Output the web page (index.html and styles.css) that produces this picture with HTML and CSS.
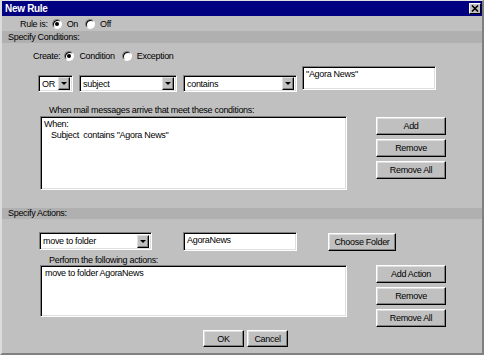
FILE: index.html
```html
<!DOCTYPE html>
<html lang="en">
<head>
  <meta charset="UTF-8" />
  <title>New Rule</title>
  <link rel="stylesheet" href="styles.css">
</head>
<body>
  <div class="window">
    <div class="titlebar">
      <span class="title">New Rule</span>
      <span class="close">
        <svg width="8" height="7" viewBox="0 0 8 7"><path d="M1 0.5 L7 6.5 M7 0.5 L1 6.5" stroke="#000" stroke-width="1.6" fill="none"/></svg>
      </span>
    </div>

    <!-- Rule state -->
    <div class="rule-row">
      <span>Rule is:</span>
      <span class="radio on"></span><span class="radio-label">On</span>
      <span class="radio"></span><span class="radio-label">Off</span>
    </div>

    <div class="section-head">Specify Conditions:</div>

    <!-- Conditions -->
    <div class="create-row">
      <span>Create:</span>
      <span class="radio on"></span><span class="radio-label">Condition</span>
      <span class="radio"></span><span class="radio-label">Exception</span>
    </div>

    <div class="criteria-row">
      <div class="select sel-op"><span class="val">OR</span><span class="arrow"><i></i></span></div>
      <div class="select sel-field"><span class="val">subject</span><span class="arrow"><i></i></span></div>
      <div class="select sel-cmp"><span class="val">contains</span><span class="arrow"><i></i></span></div>
      <div class="textbox tb-value">"Agora News"</div>
    </div>

    <div class="list-block cond-block">
      <div class="list-col">
        <div class="list-label cond-label">When mail messages arrive that meet these conditions:</div>
        <div class="listbox cond-list">
          <div>When:</div>
          <div class="indent">Subject&nbsp; contains "Agora News"</div>
        </div>
      </div>
      <div class="btn-col cond-btns">
        <button class="btn">Add</button>
        <button class="btn">Remove</button>
        <button class="btn">Remove All</button>
      </div>
    </div>

    <div class="section-head actions-head">Specify Actions:</div>

    <!-- Actions -->
    <div class="action-row">
      <div class="select sel-action"><span class="val">move to folder</span><span class="arrow"><i></i></span></div>
      <div class="textbox tb-folder">AgoraNews</div>
      <button class="btn btn-choose">Choose Folder</button>
    </div>

    <div class="list-block act-block">
      <div class="list-col">
        <div class="list-label act-label">Perform the following actions:</div>
        <div class="listbox act-list">
          <div>move to folder AgoraNews</div>
        </div>
      </div>
      <div class="btn-col act-btns">
        <button class="btn">Add Action</button>
        <button class="btn">Remove</button>
        <button class="btn">Remove All</button>
      </div>
    </div>

    <div class="footer">
      <button class="btn btn-small">OK</button>
      <button class="btn btn-small">Cancel</button>
    </div>
  </div>
</body>
</html>
```

FILE: styles.css
```css
* {
  box-sizing: border-box;
}

body {
  margin: 0;
  font-family: 'Liberation Sans', Arial, sans-serif;
  font-size: 9px;
  letter-spacing: -0.3px;
  color: #000;
  background-color: #c0c0c0;
}

.window {
  width: 484px;
  height: 355px;
  background-color: #c0c0c0;
  border-top: 1px solid #dfdfdf;
  border-left: 2px solid #dcdcdc;
  border-right: 2px solid #808080;
  border-bottom: 2px solid #808080;
  overflow: hidden;
}

/* Title bar */
.titlebar {
  height: 15px;
  background-color: #000080;
  color: #fff;
  display: flex;
  align-items: center;
  justify-content: space-between;
  padding: 0 1px 0 3px;
}

.title {
  font-size: 10px;
  font-weight: bold;
}

.close {
  width: 12px;
  height: 11px;
  background-color: #c0c0c0;
  border: 1px solid;
  border-color: #fff #000 #000 #fff;
  display: flex;
  align-items: center;
  justify-content: center;
}

/* Radio rows */
.rule-row,
.create-row {
  display: flex;
  align-items: center;
}

.rule-row {
  height: 15px;
  padding-left: 18px;
}

.create-row {
  height: 12px;
  margin-top: 7px;
  padding-left: 31px;
}

.radio {
  width: 10px;
  height: 10px;
  border-radius: 50%;
  background-color: #fff;
  border: 1px solid;
  border-color: #808080 #fff #fff #808080;
  box-shadow: inset 1px 1px #000;
  margin: 0 5px 0 4px;
  position: relative;
}

.radio.on::after {
  content: '';
  position: absolute;
  left: 2px;
  top: 2px;
  width: 4px;
  height: 4px;
  border-radius: 50%;
  background-color: #000;
}

.radio-label {
  margin-right: 3px;
}

/* Section headers */
.section-head {
  height: 12px;
  line-height: 12px;
  background-color: #b0b0b0;
  padding-left: 6px;
}

.actions-head {
  height: 11px;
  line-height: 11px;
  margin-top: 18px;
}

/* Sunken fields */
.select,
.textbox,
.listbox {
  background-color: #fff;
  border: 1px solid;
  border-color: #808080 #fff #fff #808080;
  box-shadow: inset 1px 1px #000, inset -1px -1px #dfdfdf;
}

.select {
  height: 17px;
  display: flex;
  align-items: center;
  padding: 2px 2px 2px 3px;
}

.select .val {
  flex: 1;
}

.select .arrow {
  width: 12px;
  height: 13px;
  background-color: #c0c0c0;
  border: 1px solid;
  border-color: #dfdfdf #000 #000 #dfdfdf;
  box-shadow: inset -1px -1px #808080;
  display: flex;
  align-items: center;
  justify-content: center;
}

.select .arrow i {
  border-left: 3px solid transparent;
  border-right: 3px solid transparent;
  border-top: 3px solid #000;
}

.textbox {
  padding: 2px 3px;
}

/* Criteria */
.criteria-row {
  display: flex;
  align-items: flex-start;
  margin-top: 4px;
  padding-left: 36px;
  height: 26px;
}

.criteria-row .select {
  margin-top: 9px;
}

.sel-op {
  width: 35px;
}

.sel-field {
  width: 98px;
  margin-left: 6px;
}

.sel-cmp {
  width: 114px;
  margin-left: 6px;
}

.tb-value {
  width: 134px;
  height: 24px;
  margin-left: 5px;
}

/* List blocks */
.list-block {
  display: flex;
  align-items: flex-start;
  padding-left: 38px;
}

.cond-block {
  margin-top: 12px;
}

.act-block {
  margin-top: 4px;
}

.list-col {
  width: 307px;
}

.list-label {
  padding-left: 9px;
}

.cond-label {
  height: 12px;
  line-height: 12px;
}

.act-label {
  height: 10px;
  line-height: 10px;
}

.listbox {
  padding: 2px 3px;
  line-height: 11px;
}

.listbox .indent {
  padding-left: 7px;
}

.cond-list {
  height: 74px;
}

.act-list {
  height: 52px;
  padding-left: 4px;
}

.btn-col {
  display: flex;
  flex-direction: column;
  gap: 4px;
  margin-left: 29px;
}

.cond-btns {
  margin-top: 13px;
}

.act-btns {
  margin-top: 10px;
}

/* Buttons */
.btn {
  font-family: inherit;
  font-size: 9px;
  letter-spacing: -0.3px;
  color: #000;
  width: 70px;
  height: 18px;
  padding: 0;
  background-color: #c0c0c0;
  border: 1px solid;
  border-color: #fff #000 #000 #fff;
  box-shadow: inset -1px -1px #808080, inset 1px 1px #dfdfdf;
}

/* Actions */
.action-row {
  display: flex;
  align-items: flex-start;
  margin-top: 13px;
  padding-left: 37px;
}

.sel-action {
  width: 113px;
  height: 18px;
}

.tb-folder {
  width: 114px;
  height: 19px;
  margin-left: 31px;
}

.btn-choose {
  width: 68px;
  margin-left: 31px;
  margin-top: 1px;
}

/* Footer */
.footer {
  display: flex;
  gap: 3px;
  margin-top: 3px;
  padding-left: 201px;
}

.btn-small {
  width: 41px;
  height: 17px;
}
```
